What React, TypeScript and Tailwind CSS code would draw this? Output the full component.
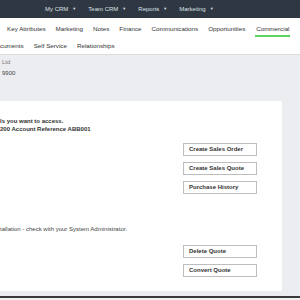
import React from "react";

const font = { fontFamily: '"Liberation Sans", Arial, sans-serif' };

function NavItem({ label }: { label: string }) {
  return (
    <div className="flex items-center gap-[4px]">
      <span>{label}</span>
      <span className="text-[4px]">▼</span>
    </div>
  );
}

function Btn({ label }: { label: string }) {
  return (
    <div className="w-[74px] h-[13px] border border-[#bdbdbd] bg-white flex items-center pl-[5px] text-[6px] font-bold text-[#333]">
      {label}
    </div>
  );
}

export default function App() {
  const tabs = ["Key Attributes", "Marketing", "Notes", "Finance", "Communications", "Opportunities", "Commercial"];
  return (
    <div className="w-[300px] h-[300px] overflow-hidden bg-[#ebedf0] flex flex-col" style={font}>
      <div className="h-[18px] shrink-0 bg-[#2f3742] flex items-center pl-[45px] gap-[12px] text-[6px] font-medium text-[#dde1e6]">
        <NavItem label="My CRM" />
        <NavItem label="Team CRM" />
        <NavItem label="Reports" />
        <NavItem label="Marketing" />
      </div>
      <div className="h-[37px] shrink-0 bg-white border-b border-[#dcdcdc] flex flex-col text-[6.25px] text-[#333]">
        <div className="flex gap-[10px] pl-[7px] pt-[7px] h-[20px]">
          {tabs.map((t) => (
            <div key={t} className="flex flex-col items-center">
              <span className="leading-[8px]">{t}</span>
              {t === "Commercial" && <div className="mt-[2px] h-[2px] w-[35px] bg-[#5cd65c]" />}
            </div>
          ))}
        </div>
        <div className="flex gap-[10px] pt-[4px]">
          <span className="leading-[8px]">cuments</span>
          <span className="leading-[8px]">Self Service</span>
          <span className="leading-[8px]">Relationships</span>
        </div>
      </div>
      <div className="h-[46px] shrink-0 pl-[2px] pt-[3px] text-[6px]">
        <div className="leading-[8px] text-[#777]">Ltd</div>
        <div className="leading-[8px] mt-[3px] text-[#444]">9900</div>
      </div>
      <div className="w-[282px] h-[190px] shrink-0 bg-white flex flex-col">
        <div className="pt-[16px] text-[6px] font-bold text-[#333]">
          <div className="leading-[8px]">ls you want to access.</div>
          <div className="leading-[8px]">200 Account Reference ABB001</div>
        </div>
        <div className="flex flex-col items-end pr-[25px] mt-[10px] gap-[6px]">
          <Btn label="Create Sales Order" />
          <Btn label="Create Sales Quote" />
          <Btn label="Purchase History" />
        </div>
        <div className="mt-[31px] text-[6px] leading-[8px] text-[#444]">
          tallation - check with your System Administrator.
        </div>
        <div className="flex flex-col items-end pr-[25px] mt-[12px] gap-[6px]">
          <Btn label="Delete Quote" />
          <Btn label="Convert Quote" />
        </div>
      </div>
      <div className="h-[5px] shrink-0" />
      <div className="h-[1.5px] shrink-0 bg-[#3a3a3a]" />
      <div className="flex-1 bg-[#f2f2f2]" />
    </div>
  );
}
